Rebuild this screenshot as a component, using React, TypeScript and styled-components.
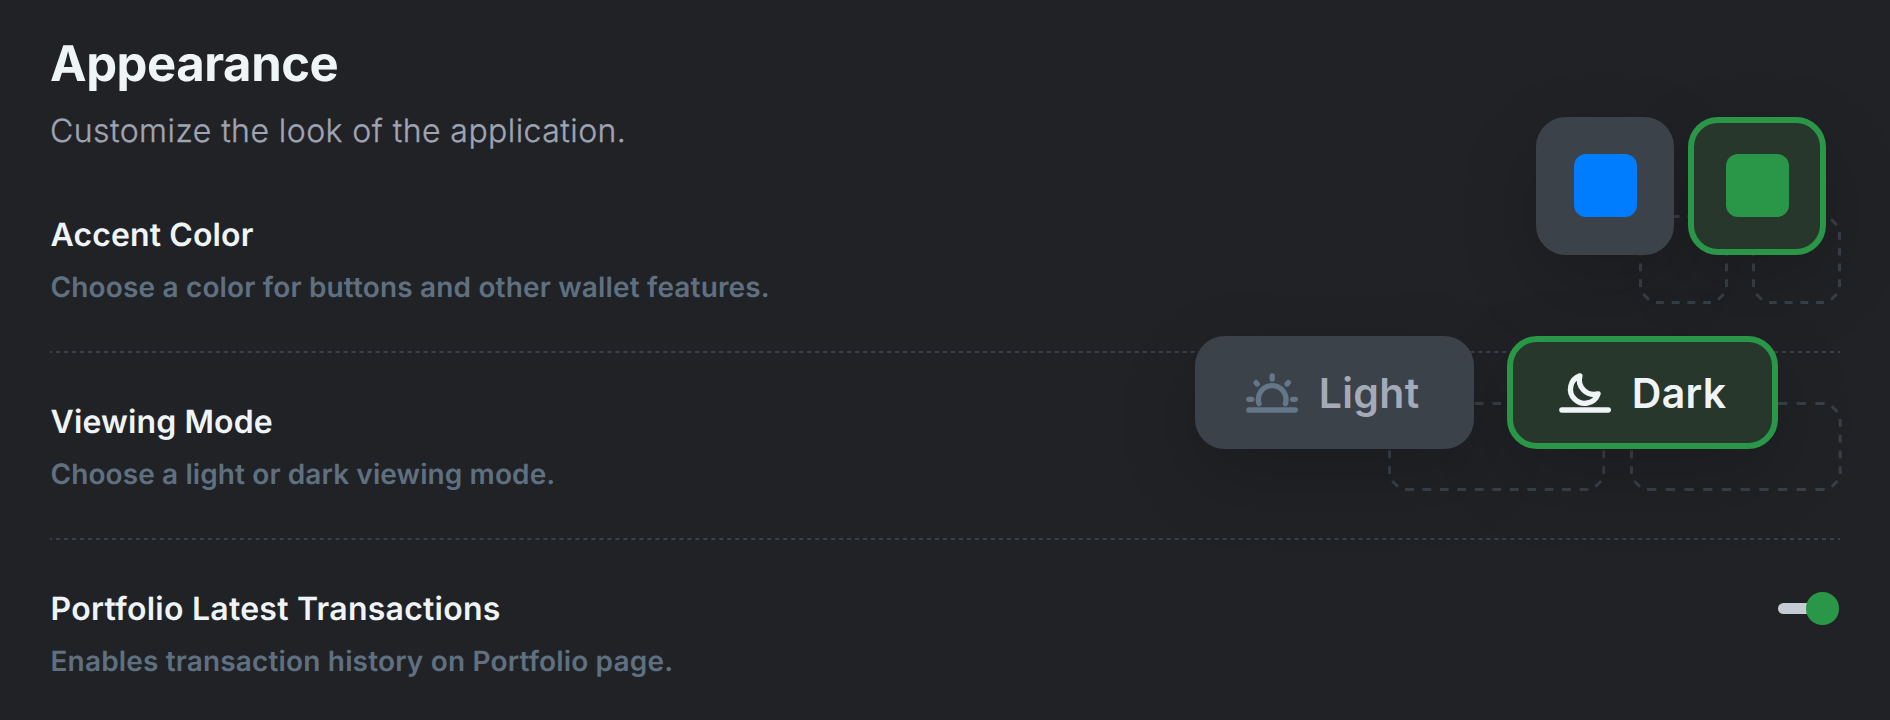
import React, { useState } from 'react';
import styled, { createGlobalStyle, css } from 'styled-components';

const GlobalStyle = createGlobalStyle`
  * { box-sizing: border-box; }
  body {
    margin: 0;
    background: #212226;
    font-family: Inter, "Liberation Sans", sans-serif;
    text-rendering: geometricPrecision;
  }
  button { font: inherit; }
`;

const ACCENT = '#2a9648';
const OUTLINE = '#3a4048';

const Page = styled.main`
  height: 720px;
  padding: 0 50px;
  overflow: hidden;
  background: #212226;
`;

const Header = styled.header`
  height: 166px;
  padding-top: 35px;
`;

const Title = styled.h1`
  margin: 0;
  font-size: 49px;
  line-height: 58px;
  font-weight: 700;
  letter-spacing: -0.44px;
  color: #eff4f7;
`;

const Subtitle = styled.p`
  margin: 18px 0 0;
  font-size: 32px;
  line-height: 40px;
  font-weight: 300;
  letter-spacing: 0.44px;
  -webkit-text-stroke: 0.35px #a0a5b4;
  color: #a0a5b4;
`;

const Row = styled.section`
  display: flex;
  flex-direction: column;
  height: 187.2px;
`;

const RowBody = styled.div`
  display: flex;
  flex: 1;
  justify-content: space-between;
  align-items: flex-start;
  padding-top: 48.9px;
`;

const RowText = styled.div`
  padding-left: 0.5px;
`;

const Label = styled.h2<{ $tracking?: number }>`
  margin: 0 0 13.7px;
  font-size: 32px;
  line-height: 40px;
  font-weight: 600;
  letter-spacing: ${(p) => p.$tracking ?? 0.12}px;
  color: #eff4f7;
`;

const Hint = styled.p<{ $tracking?: number }>`
  margin: 0;
  font-size: 28px;
  line-height: 36px;
  font-weight: 600;
  letter-spacing: ${(p) => p.$tracking ?? 0.16}px;
  color: #5f7081;
`;

const DividerLine = styled.svg`
  display: block;
  width: 1790px;
  height: 2px;
  flex: none;
`;

const Slots = styled.div<{ $gap: number; $overhang: number }>`
  position: relative;
  display: flex;
  gap: ${(p) => p.$gap}px;
  margin-right: -${(p) => p.$overhang}px;
`;

const SlotFrame = styled.svg`
  display: block;
  flex: none;
`;

const Floating = styled.div<{ $left: number; $top: number; $gap: number }>`
  position: absolute;
  z-index: 1;
  left: ${(p) => p.$left}px;
  top: ${(p) => p.$top}px;
  display: flex;
  gap: ${(p) => p.$gap}px;
`;

/* The shadow sits on a layer below the whole group, so one option never shades its neighbour. */
const optionSurface = css<{ $active: boolean }>`
  position: relative;
  display: flex;
  align-items: center;
  justify-content: center;
  padding: 0;
  border: 6px solid ${(p) => (p.$active ? ACCENT : '#3c4249')};
  border-radius: 30px;
  background: ${(p) => (p.$active ? '#27372c' : '#3c4249')};

  &::before {
    content: '';
    position: absolute;
    z-index: -1;
    inset: -6px;
    border-radius: 30px;
    box-shadow: 0 28px 78px rgba(0, 0, 0, 0.18);
  }
`;

const ColorOption = styled.button<{ $active: boolean }>`
  ${optionSurface}
  width: 138px;
  height: 138px;
`;

const Swatch = styled.span<{ $color: string }>`
  width: 63px;
  height: 63px;
  margin-bottom: 1px;
  border-radius: 12px;
  background: ${(p) => p.$color};
`;

const ModeOption = styled.button<{ $active: boolean; $width: number; $indent: number }>`
  ${optionSurface}
  justify-content: flex-start;
  width: ${(p) => p.$width}px;
  height: 113.6px;
  padding-left: ${(p) => p.$indent}px;
  gap: 20.4px;
  font-size: 41px;
  line-height: 50px;
  font-weight: 600;
  letter-spacing: 0.3px;
  color: ${(p) => (p.$active ? '#eff4f7' : '#a5aab8')};
`;

const ModeIcon = styled.svg`
  width: 52.4px;
  height: 40px;
  flex: none;
`;

const Toggle = styled.button`
  position: relative;
  width: 61px;
  height: 32.4px;
  margin: 2.9px 1px 0 0;
  padding: 0;
  border: 0;
  background: none;
`;

const Track = styled.span`
  display: block;
  width: 45px;
  height: 10.6px;
  border-radius: 6px;
  background: #c6ccd3;
`;

const Knob = styled.span`
  position: absolute;
  right: 0;
  top: 0;
  width: 32.6px;
  height: 32.6px;
  border-radius: 50%;
  background: ${ACCENT};
`;

/* Rounded outline whose dashes are spread evenly along each side, with one dash on every corner. */
function DashedSlot({ width, height, columns }: { width: number; height: number; columns: number }) {
  const inset = 17;
  const e = 1.5;
  const r = width - e;
  const b = height - e;
  const dx = (width - inset * 2) / (columns * 2 - 1);
  const dy = (height - inset * 2) / 7;
  const near = 4.2;
  const far = 10;
  return (
    <SlotFrame width={width} height={height} fill="none" stroke={OUTLINE} strokeWidth="3">
      <path strokeDasharray={dx} d={`M${inset} ${e}H${width - inset}M${inset} ${b}H${width - inset}`} />
      <path strokeDasharray={dy} d={`M${e} ${inset}V${height - inset}M${r} ${inset}V${height - inset}`} />
      <path
        d={`M${near} ${far}L${far} ${near}M${width - far} ${near}L${width - near} ${far}M${width - near} ${height - far}L${width - far} ${height - near}M${far} ${height - near}L${near} ${height - far}`}
      />
    </SlotFrame>
  );
}

function Divider() {
  return (
    <DividerLine viewBox="0 0 1790 2">
      <path d="M0 1H1790" stroke={OUTLINE} strokeWidth="2" strokeDasharray="4 3.991" strokeDashoffset="2" />
    </DividerLine>
  );
}

function SunIcon() {
  return (
    <ModeIcon viewBox="0 0 157 120" fill="none" stroke="#647789" strokeWidth="16" strokeLinecap="round">
      <path d="M8.500 111H148M39 92A41.500 41.500 0 1 1 118 92" />
      <path d="M78.500 8.500V18M8.500 79H17M140 79H148M30 29L33.500 33M127 29L123 33" />
    </ModeIcon>
  );
}

function MoonIcon() {
  return (
    <ModeIcon viewBox="0 0 157 120" fill="none" stroke="#eff4f7" strokeWidth="16" strokeLinecap="round" strokeLinejoin="round">
      <path d="M8.500 111H148" />
      <path d="M62.500 8.500A42.500 42.500 0 1 0 117 62.500C83 71 54 42 62.500 8.500Z" />
    </ModeIcon>
  );
}

export default function App() {
  const [accent, setAccent] = useState('green');
  const [mode, setMode] = useState('dark');
  return (
    <>
      <GlobalStyle />
      <Page>
        <Header>
          <Title>Appearance</Title>
          <Subtitle>Customize the look of the application.</Subtitle>
        </Header>

        <Row>
          <RowBody>
            <RowText>
              <Label>Accent Color</Label>
              <Hint>Choose a color for buttons and other wallet features.</Hint>
            </RowText>
            <Slots $gap={24} $overhang={0.8}>
              <DashedSlot width={89} height={89} columns={4} />
              <DashedSlot width={89} height={89} columns={4} />
              <Floating $left={-102.8} $top={-97.9} $gap={14}>
                <ColorOption $active={accent === 'blue'} onClick={() => setAccent('blue')} aria-label="Blue">
                  <Swatch $color="#007dff" />
                </ColorOption>
                <ColorOption $active={accent === 'green'} onClick={() => setAccent('green')} aria-label="Green">
                  <Swatch $color={ACCENT} />
                </ColorOption>
              </Floating>
            </Slots>
          </RowBody>
          <Divider />
        </Row>

        <Row>
          <RowBody>
            <RowText>
              <Label>Viewing Mode</Label>
              <Hint $tracking={0.1}>Choose a light or dark viewing mode.</Hint>
            </RowText>
            <Slots $gap={25} $overhang={1.7}>
              <DashedSlot width={217.4} height={89} columns={11} />
              <DashedSlot width={211.7} height={89} columns={10} />
              <Floating $left={-192.6} $top={-66.3} $gap={32.5}>
                <ModeOption $active={mode === 'light'} $width={279} $indent={45} onClick={() => setMode('light')}>
                  <SunIcon />
                  Light
                </ModeOption>
                <ModeOption $active={mode === 'dark'} $width={271.6} $indent={46.5} onClick={() => setMode('dark')}>
                  <MoonIcon />
                  Dark
                </ModeOption>
              </Floating>
            </Slots>
          </RowBody>
          <Divider />
        </Row>

        <Row>
          <RowBody>
            <RowText>
              <Label $tracking={0.25}>Portfolio Latest Transactions</Label>
              <Hint>Enables transaction history on Portfolio page.</Hint>
            </RowText>
            <Toggle role="switch" aria-checked="true" aria-label="Portfolio latest transactions">
              <Track />
              <Knob />
            </Toggle>
          </RowBody>
        </Row>
      </Page>
    </>
  );
}
